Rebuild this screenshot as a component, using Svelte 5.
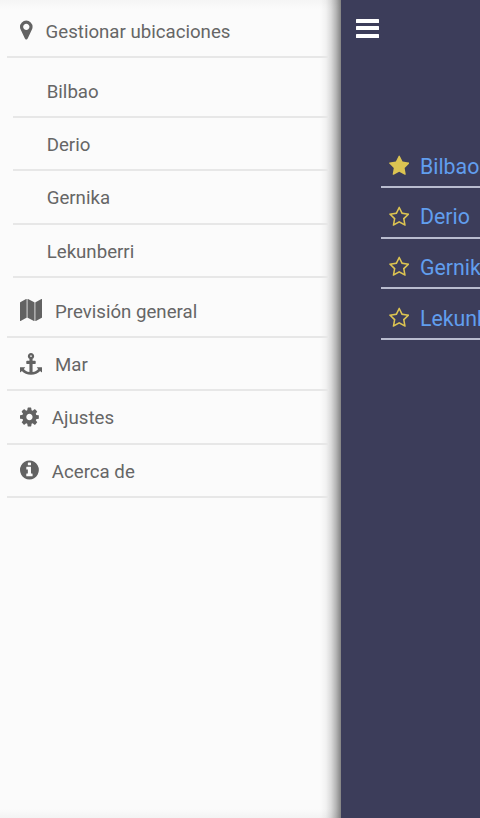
<script>
  const icons = {
    marker: { x: 384, w: 1024, d: 'M1152 640q0-106-75-181t-181-75-181 75-75 181 75 181 181 75 181-75 75-181zm256 0q0 109-33 179l-364 774q-16 33-47.5 52t-67.5 19-67.5-19-46.5-52l-365-774q-33-70-33-179 0-212 150-362t362-150 362 150 150 362z' },
    map: { x: 0, w: 1792, d: 'M512 0q13 0 22.5 9.5t9.5 22.5v1472q0 20-17 28l-480 256q-7 4-15 4-13 0-22.5-9.5t-9.5-22.5v-1472q0-20 17-28l480-256q7-4 15-4zm1248 0q13 0 22.5 9.5t9.5 22.5v1472q0 20-17 28l-480 256q-7 4-15 4-13 0-22.5-9.5t-9.5-22.5v-1472q0-20 17-28l480-256q7-4 15-4zm-1120 0q8 0 14 3l512 256q18 10 18 29v1472q0 13-9.5 22.5t-22.5 9.5q-8 0-14-3l-512-256q-18-10-18-29v-1472q0-13 9.5-22.5t22.5-9.5z' },
    anchor: { x: 0, w: 1792, d: 'M960 256q0-26-19-45t-45-19-45 19-19 45 19 45 45 19 45-19 19-45zm832 928v352q0 22-20 30-8 2-12 2-12 0-23-9l-93-93q-119 143-318.5 226.5t-429.5 83.5-429.5-83.5-318.5-226.5l-93 93q-9 9-23 9-4 0-12-2-20-8-20-30v-352q0-14 9-23t23-9h352q22 0 30 20 8 19-7 35l-100 100q67 91 189.5 153.5t271.5 82.5v-647h-192q-26 0-45-19t-19-45v-128q0-26 19-45t45-19h192v-163q-58-34-93-92.5t-35-128.5q0-106 75-181t181-75 181 75 75 181q0 70-35 128.5t-93 92.5v163h192q26 0 45 19t19 45v128q0 26-19 45t-45 19h-192v647q149-20 271.5-82.5t189.5-153.5l-100-100q-15-16-7-35 8-20 30-20h352q14 0 23 9t9 23z' },
    cog: { x: 128, w: 1536, d: 'M1152 896q0-106-75-181t-181-75-181 75-75 181 75 181 181 75 181-75 75-181zm512-109v222q0 12-8 23t-20 13l-185 28q-19 54-39 91 35 50 107 138 10 12 10 25t-9 23q-27 37-99 108t-94 71q-12 0-26-9l-138-108q-44 23-91 38-16 136-29 186-7 28-36 28h-222q-14 0-24.5-8.5t-11.5-21.5l-28-184q-49-16-90-37l-141 107q-10 9-25 9-14 0-25-11-126-114-165-168-7-10-7-23 0-12 8-23 15-21 51-66.5t54-70.5q-27-50-41-99l-183-27q-13-2-21-12.5t-8-23.5v-222q0-12 8-23t19-13l186-28q14-46 39-92-40-57-107-138-10-12-10-24 0-10 9-23 26-36 98.5-107.5t94.5-71.5q13 0 26 10l138 107q44-23 91-38 16-136 29-186 7-28 36-28h222q14 0 24.5 8.5t11.5 21.5l28 184q49 16 90 37l142-107q9-9 24-9 13 0 25 10 129 119 165 170 7 8 7 22 0 12-8 23-15 21-51 66.5t-54 70.5q26 50 41 98l183 28q13 2 21 12.5t8 23.5z' },
    info: { x: 128, w: 1536, d: 'M1152 1376v-160q0-14-9-23t-23-9h-96v-512q0-14-9-23t-23-9h-320q-14 0-23 9t-9 23v160q0 14 9 23t23 9h96v320h-96q-14 0-23 9t-9 23v160q0 14 9 23t23 9h448q14 0 23-9t9-23zm-128-896v-160q0-14-9-23t-23-9h-192q-14 0-23 9t-9 23v160q0 14 9 23t23 9h192q14 0 23-9t9-23zm640 416q0 209-103 385.5t-279.5 279.5-385.5 103-385.5-103-279.5-279.5-103-385.5 103-385.5 279.5-279.5 385.5-103 385.5 103 279.5 279.5 103 385.5z' },
    star: { x: 64, w: 1664, d: 'M1728 647q0 22-26 48l-363 354 86 500q1 7 1 20 0 21-10.5 35.5t-30.5 14.5q-19 0-40-12l-449-236-449 236q-22 12-40 12-21 0-31.5-14.5t-10.5-35.5q0-6 2-20l86-500-364-354q-25-27-25-48 0-37 56-46l502-73 225-455q19-41 49-41t49 41l225 455 502 73q56 9 56 46z' },
    starOutline: { x: 64, w: 1664, d: 'M1201 1004l306-297-422-62-189-382-189 382-422 62 306 297-73 421 378-199 377 199zm527-357q0 22-26 48l-363 354 86 500q1 7 1 20 0 50-41 50-19 0-40-12l-449-236-449 236q-22 12-40 12-21 0-31.5-14.5t-10.5-35.5q0-6 2-20l86-500-364-354q-25-27-25-48 0-37 56-46l502-73 225-455q19-41 49-41t49 41l225 455 502 73q56 9 56 46z' }
  };
  const places = ['Bilbao', 'Derio', 'Gernika', 'Lekunberri'];
  const links = [
    { icon: 'map', label: 'Previsión general' },
    { icon: 'anchor', label: 'Mar' },
    { icon: 'cog', label: 'Ajustes' },
    { icon: 'info', label: 'Acerca de' }
  ];
</script>

{#snippet glyph(name)}
  <svg class="icon" viewBox="{icons[name].x} 0 {icons[name].w} 1792" style:width="{icons[name].w / 1792}em" aria-hidden="true">
    <path d={icons[name].d} />
  </svg>
{/snippet}

<div class="app">
  <nav class="drawer">
    <a class="row" href="#locations">{@render glyph('marker')}<span>Gestionar ubicaciones</span></a>
    <div class="places">
      {#each places as place}
        <a class="row sub" href="#{place}"><span>{place}</span></a>
      {/each}
    </div>
    {#each links as link}
      <a class="row" href="#{link.icon}">{@render glyph(link.icon)}<span>{link.label}</span></a>
    {/each}
  </nav>
  <main>
    <button class="menu" aria-label="Menú"><i></i><i></i><i></i></button>
    <div class="favorites">
      {#each places as place, i}
        <a class="favorite" href="#{place}">{@render glyph(i === 0 ? 'star' : 'starOutline')}<span>{place}</span></a>
      {/each}
    </div>
  </main>
</div>

<style>
  :global(body) { margin: 0; }
  .app {
    display: flex;
    width: 480px;
    height: 818px;
    overflow: hidden;
    font-family: Roboto, sans-serif;
    background: #3c3d5a;
  }
  a { text-decoration: none; color: inherit; }
  .drawer {
    box-sizing: border-box;
    flex: 0 0 341px;
    padding: 4.8px 12px 0 7px;
    color: #666;
    background:
      linear-gradient(to right, transparent 320px, rgba(0, 0, 0, .04) 326px, rgba(0, 0, 0, .13) 331px, rgba(0, 0, 0, .28) 336px, rgba(0, 0, 0, .48) 341px),
      linear-gradient(to bottom, #f5f5f5, #fbfbfb 9px, #fbfbfb 809px, #f3f3f3);
  }
  .row {
    box-sizing: border-box;
    display: flex;
    align-items: center;
    gap: 13px;
    height: 53.33px;
    padding-left: 13px;
    border-bottom: 2px solid #e7e7e7;
    font-size: 18.67px;
    line-height: 24px;
  }
  .row span { padding-top: 2.6px; }
  .icon {
    flex: none;
    height: 1em;
    font-size: 22px;
    fill: #626262;
  }
  .places { padding: 6.67px 0 6.67px 6px; }
  .sub { padding-left: 33.7px; }
  main { flex: 1; min-width: 0; }
  .menu {
    display: flex;
    flex-direction: column;
    gap: 3.6px;
    width: 23px;
    margin: 18.5px 0 0 15px;
    padding: 0;
    border: 0;
    background: none;
  }
  .menu i { height: 4px; border-radius: 0.5px; background: #fff; }
  .favorites { margin: 99.8px 0 0 40px; }
  .favorite {
    box-sizing: border-box;
    display: flex;
    align-items: center;
    gap: 10.5px;
    height: 50.67px;
    padding: 8.6px 0 0 8px;
    border-bottom: 2px solid #b9bccf;
    color: #619eee;
    font-size: 21.33px;
    white-space: nowrap;
  }
  .favorite .icon { fill: #dcc452; }
</style>
